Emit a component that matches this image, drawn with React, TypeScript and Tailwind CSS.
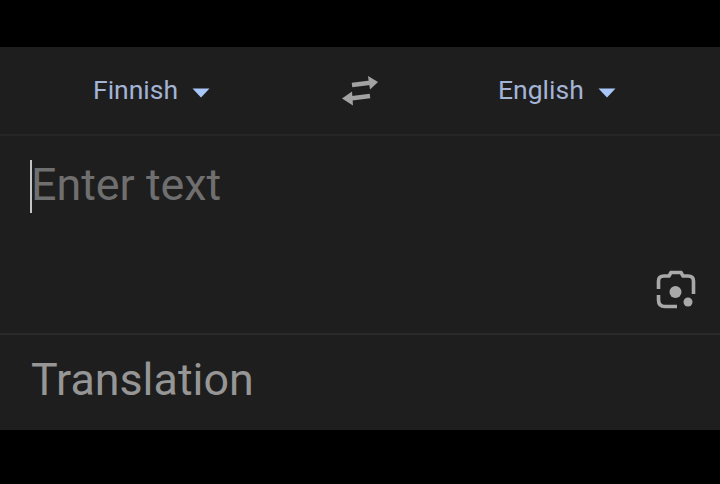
import React from 'react';

const Caret = () => (
  <svg width="18" height="10" viewBox="0 0 18 10" className="ml-[14px] mt-[5px]">
    <path d="M0.5 0.5 H17.5 L9 9.5 Z" fill="#a8c7fa" />
  </svg>
);

const SwapIcon = () => (
  <svg width="38" height="30" viewBox="0 0 38 30" fill="none">
    <path d="M10 9 L30 6.5" stroke="#a3a3a3" strokeWidth="4.5" />
    <path d="M26 0 L36 6 L28 13.5 Z" fill="#a3a3a3" />
    <path d="M28 20 L8 22.5" stroke="#a3a3a3" strokeWidth="4.5" />
    <path d="M10 15.5 L0 22.5 L11 29.5 Z" fill="#a3a3a3" />
  </svg>
);

const LensIcon = () => (
  <svg width="40" height="40" viewBox="0 0 40 40" fill="none">
    <path
      d="M2.5 19 V11 Q2.5 6 8 6 H13 L15 2.5 H25 L27 6 H32 Q37.5 6 37.5 11 V24"
      stroke="#a9a9a9"
      strokeWidth="3.6"
    />
    <path d="M2.5 25 V30 Q2.5 36.5 9 36.5 H21" stroke="#a9a9a9" strokeWidth="3.6" />
    <circle cx="19.5" cy="22" r="6" fill="#a9a9a9" />
    <circle cx="32" cy="32" r="4.5" fill="#a9a9a9" />
  </svg>
);

export default function App() {
  return (
    <div className="w-[720px] h-[484px] bg-black flex flex-col pt-[47px] pb-[54px] font-['Roboto',sans-serif]">
      <div className="flex-1 bg-[#1e1e1e] flex flex-col">
        {/* language bar */}
        <div className="h-[89px] flex items-center border-b-2 border-[#262626] pl-[93px]">
          <div className="w-[249px] flex items-center">
            <span className="text-[26.5px] leading-none text-[#a3b4d6]">Finnish</span>
            <Caret />
          </div>
          <div className="w-[38px] mr-[118px]">
            <SwapIcon />
          </div>
          <div className="flex items-center">
            <span className="text-[26.5px] leading-none text-[#a3b4d6]">English</span>
            <Caret />
          </div>
        </div>

        {/* input */}
        <div className="h-[199px] relative border-b-2 border-[#2b2b2b] pl-[31px] pt-[24px]">
          <div className="absolute left-[30px] top-[24px] w-[2px] h-[53px] bg-[#c4c4c4]" />
          <div className="text-[44.8px] leading-[50px] text-[#6f6f6f]">Enter text</div>
          <div className="absolute right-[24px] bottom-[23px]">
            <LensIcon />
          </div>
        </div>

        {/* translation */}
        <div className="flex-1 pl-[31px] pt-[20px]">
          <div className="text-[44.8px] leading-[50px] text-[#969696]">Translation</div>
        </div>
      </div>
    </div>
  );
}
